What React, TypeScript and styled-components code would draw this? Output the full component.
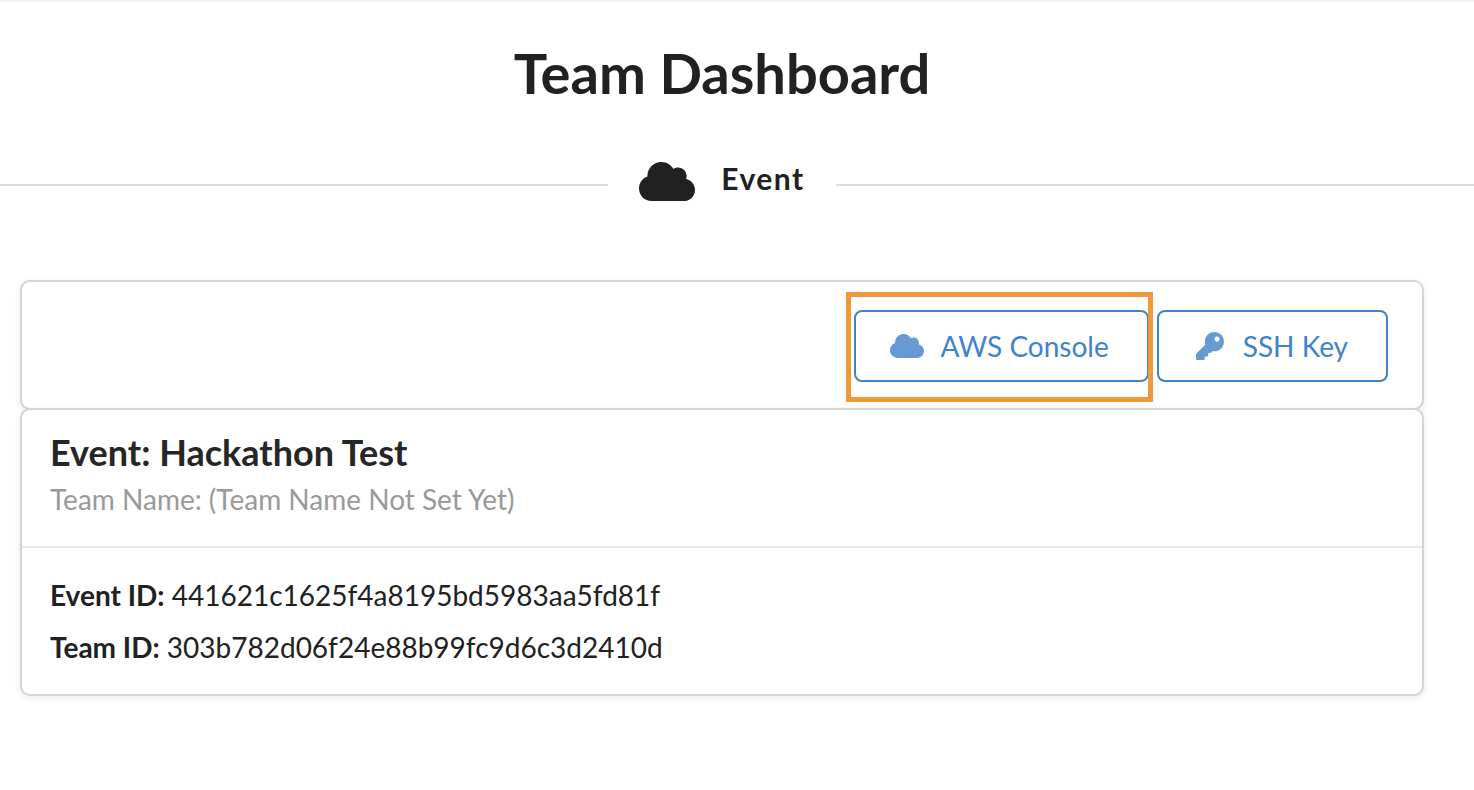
import React from "react";
import styled, { createGlobalStyle } from "styled-components";
import { FaCloud, FaKey } from "react-icons/fa";

const GlobalStyle = createGlobalStyle`
  *, *::before, *::after { box-sizing: border-box; }
  body {
    margin: 0;
    background: #fff;
    color: #212121;
    font-family: Lato, "Liberation Sans", sans-serif;
    font-size: 28px;
    overflow-x: hidden;
  }
`;

const Page = styled.main`
  border-top: 2px solid #f1f1f1;
  padding: 35px 30px 40px 0;
`;

const Title = styled.h1`
  margin: 0 0 50px;
  font-size: 56px;
  line-height: 72px;
  font-weight: 700;
  text-align: center;
`;

const Divider = styled.div`
  display: flex;
  align-items: center;
  margin: 0 -30px 69px 0;
`;

/* The trailing line runs past the page's right padding to the window edge. */
const Line = styled.span<{ $bleed?: boolean }>`
  flex: 1 1 ${(p) => (p.$bleed ? "30px" : "0px")};
  height: 2px;
  background: #dededf;
`;

const DividerLabel = styled.h2`
  display: flex;
  align-items: center;
  gap: 26px;
  margin: 0;
  padding: 0 31px 7px;
  font-size: 30px;
  line-height: 36px;
  font-weight: 700;
  letter-spacing: 0.05em;
`;

const DividerText = styled.span`
  padding-bottom: 8px;
`;

const CloudLarge = styled(FaCloud)`
  width: 56px;
  height: 45px;
`;

const Cards = styled.div`
  margin: 0 20px;
`;

const Card = styled.section`
  border: 2px solid #d4d4d5;
  border-radius: 10px;
  background: #fff;
  box-shadow: 0 2px 6px rgba(34, 36, 38, 0.1);
  & + & {
    position: relative;
    margin-top: -2px;
  }
`;

const Toolbar = styled.div`
  display: flex;
  flex-wrap: wrap;
  justify-content: flex-end;
  gap: 8px;
  padding: 28px 34px 26px;
`;

const Highlight = styled.div`
  position: relative;
  &::after {
    content: "";
    position: absolute;
    inset: -18px -4px -20px -8px;
    border: 5px solid #f19938;
    pointer-events: none;
  }
`;

const ActionButton = styled.button`
  display: flex;
  align-items: center;
  gap: 16px;
  height: 72px;
  padding: 0 38px 0 34px;
  border: 2px solid #4183c8;
  border-radius: 8px;
  background: #fff;
  color: #4183c8;
  font: inherit;
  line-height: 36px;
  white-space: nowrap;
  cursor: pointer;
`;

const IconSlot = styled.span`
  display: flex;
  width: 34px;
  opacity: 0.8;
  svg { width: 34px; height: 28px; }
`;

const CardHeader = styled.header`
  padding: 20px 28px 30px;
  border-bottom: 2px solid #e8e8e8;
`;

const CardTitle = styled.h3`
  margin: 0 0 8px;
  font-size: 36px;
  line-height: 44px;
  font-weight: 700;
  color: #262626;
`;

const Meta = styled.p`
  margin: 0;
  line-height: 34px;
  color: #999;
`;

const Details = styled.div`
  padding: 21px 28px;
`;

const Detail = styled.p`
  margin: 0;
  line-height: 52px;
`;

const details = [
  { label: "Event ID:", value: "441621c1625f4a8195bd5983aa5fd81f" },
  { label: "Team ID:", value: "303b782d06f24e88b99fc9d6c3d2410d" },
];

export default function App() {
  return (
    <>
      <GlobalStyle />
      <Page>
        <Title>Team Dashboard</Title>
        <Divider>
          <Line />
          <DividerLabel>
            <CloudLarge aria-hidden />
            <DividerText>Event</DividerText>
          </DividerLabel>
          <Line $bleed />
        </Divider>
        <Cards>
          <Card>
            <Toolbar>
              <Highlight>
                <ActionButton type="button">
                  <IconSlot><FaCloud aria-hidden /></IconSlot>
                  AWS Console
                </ActionButton>
              </Highlight>
              <ActionButton type="button">
                <IconSlot><FaKey aria-hidden /></IconSlot>
                SSH Key
              </ActionButton>
            </Toolbar>
          </Card>
          <Card>
            <CardHeader>
              <CardTitle>Event: Hackathon Test</CardTitle>
              <Meta>Team Name: (Team Name Not Set Yet)</Meta>
            </CardHeader>
            <Details>
              {details.map((d) => (
                <Detail key={d.label}>
                  <strong>{d.label}</strong> {d.value}
                </Detail>
              ))}
            </Details>
          </Card>
        </Cards>
      </Page>
    </>
  );
}
